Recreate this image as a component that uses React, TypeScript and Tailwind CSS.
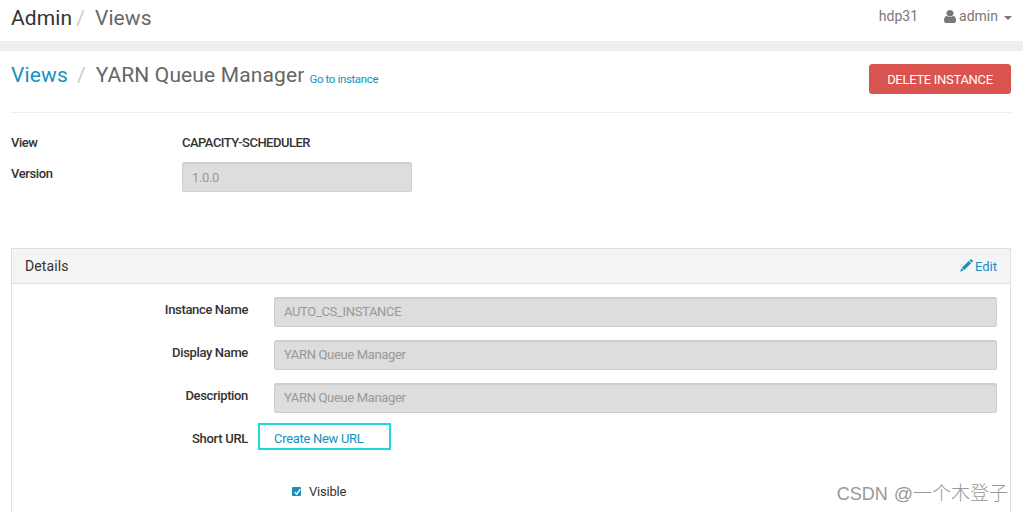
import type { ReactNode } from "react";

type FieldRowProps = {
  label: string;
  value: string;
};

function UserIcon() {
  return (
    <svg viewBox="0 0 1280 1536" className="h-[13px] w-[12px] shrink-0" fill="currentColor" preserveAspectRatio="none">
      <path d="M1280 1271q0 109-62.5 187t-150.5 78h-854q-88 0-150.5-78t-62.5-187q0-85 8.5-160.5t31.5-152 58.5-131 94-89 134.5-34.5q131 128 313 128t313-128q76 0 134.5 34.5t94 89 58.5 131 31.5 152 8.5 160.5zm-256-887q0 159-112.5 271.5t-271.5 112.5-271.5-112.5-112.5-271.5 112.5-271.5 271.5-112.5 271.5 112.5 112.5 271.5z" />
    </svg>
  );
}

function PencilIcon() {
  return (
    <svg viewBox="0 0 13 13" className="h-[13px] w-[13px] shrink-0" fill="currentColor">
      <path d="M10.2.4a.9.9 0 0 1 1.2 0l1.2 1.2a.9.9 0 0 1 0 1.2l-.9.9-2.4-2.4zM8.7 1.9l2.4 2.4-6.8 6.8-2.4-2.4zM1.4 9.3l2.3 2.3L.2 12.8z" />
    </svg>
  );
}

function TextBox({ children }: { children: ReactNode }) {
  return (
    <div className="h-[30px] rounded-xs border border-[#cfcfcf] bg-[#dddddd] px-[9px] text-[13px] tracking-[-0.34px] text-[#999999] shadow-[inset_0_1px_1px_rgba(0,0,0,0.075)]">
      {children}
    </div>
  );
}

function FieldRow({ label, value }: FieldRowProps) {
  return (
    <div className="mb-[13px] flex">
      <div className="mr-[26px] w-[236px] pt-[3px] text-right text-[13px] leading-5 font-medium tracking-[-0.35px]">{label}</div>
      <div className="flex-1 leading-[28px]">
        <TextBox>{value}</TextBox>
      </div>
    </div>
  );
}

export default function App() {
  return (
    <div className="relative h-[513px] overflow-hidden bg-white font-[Roboto,'Liberation_Sans',sans-serif] text-[13px] text-[#333333]">
      <header className="flex h-[41px] justify-between pr-[11px] pl-[11px]">
        <div className="flex pt-1 text-[21px] leading-7 tracking-[0.1px]">
          <span>Admin</span>
          <span className="ml-1 text-[#cccccc]">/</span>
          <span className="ml-[10px] text-[#666666]">Views</span>
        </div>
        <div className="flex pt-[6px] text-[14px] leading-[21px] text-[#777777]">
          <span>hdp31</span>
          <div className="ml-[26px] flex">
            <div className="pt-1">
              <UserIcon />
            </div>
            <span className="ml-[3px]">admin</span>
            <span className="mt-[10px] ml-[6px] h-0 w-0 border-x-4 border-t-4 border-x-transparent border-t-[#777777]" />
          </div>
        </div>
      </header>

      <div className="h-[10px] bg-[#eeeeee]" />

      <main className="pr-3 pl-[11px]">
        <div className="flex h-[62px] justify-between border-b border-[#eeeeee]">
          <div className="flex pt-[10px] text-[21px] leading-7 tracking-[0.13px]">
            <a href="#" className="text-[#1491c1]">Views</a>
            <span className="ml-[9px] text-[#cccccc]">/</span>
            <span className="ml-[10px] text-[#666666]">YARN Queue Manager</span>
            <a href="#" className="ml-[5px] pt-[4px] text-[11.5px] tracking-[-0.37px] text-[#1491c1]">Go to instance</a>
          </div>
          <button className="mt-[13px] h-[30px] w-[142px] rounded-[3px] border border-[#d9534f] bg-[#d9534f] pt-[2px] text-[13px] tracking-[-0.3px] text-white">
            DELETE INSTANCE
          </button>
        </div>

        <div className="h-[135px] pt-5 font-medium">
          <div className="flex h-[29px] leading-5">
            <div className="w-[171px] tracking-[-0.5px]">View</div>
            <div className="tracking-[-0.52px]">CAPACITY-SCHEDULER</div>
          </div>
          <div className="flex">
            <div className="w-[171px] pt-[2px] leading-5 tracking-[-0.4px]">Version</div>
            <div className="w-[230px] leading-[29px] font-normal">
              <TextBox>1.0.0</TextBox>
            </div>
          </div>
        </div>

        <section className="h-[280px] border border-[#e0e0e0]">
          <div className="flex h-[35px] justify-between border-b border-[#e0e0e0] bg-[#f4f4f4] px-[13px] leading-[34px]">
            <h2 className="text-[14px] tracking-[0.1px]">Details</h2>
            <a href="#" className="flex text-[13px] leading-[35px] text-[#1491c1]">
              <span className="mr-[2px] pt-[10px]">
                <PencilIcon />
              </span>
              Edit
            </a>
          </div>
          <div className="pt-[13px] pr-[13px]">
            <FieldRow label="Instance Name" value="AUTO_CS_INSTANCE" />
            <FieldRow label="Display Name" value="YARN Queue Manager" />
            <FieldRow label="Description" value="YARN Queue Manager" />
            <div className="-mt-[3px] flex">
              <div className="mr-[10px] w-[236px] pt-[5px] text-right leading-[21px] font-medium tracking-[-0.3px]">Short URL</div>
              <div className="h-[27px] w-[133px] border-[2px] border-[#1ddada] pl-[14px] leading-[27px] tracking-[-0.3px]">
                <a href="#" className="text-[#1491c1]">Create New URL</a>
              </div>
            </div>
            <label className="mt-[31px] ml-[280px] flex items-center leading-[21px] tracking-[-0.2px]">
              <svg viewBox="0 0 9 9" className="mr-[8px] h-[9px] w-[9px]">
                <rect width="9" height="9" rx="1" fill="#1491c1" />
                <path d="M2.8 5.2l2 2L8.3 2.2" fill="none" stroke="#fff" strokeWidth="1.4" />
              </svg>
              Visible
            </label>
          </div>
        </section>
      </main>

      <div className="absolute top-[480px] right-[15px] flex font-['Liberation_Sans','Noto_Sans_CJK_SC',sans-serif] text-[19px] leading-7 font-light whitespace-nowrap text-[#999999]">
        <span className="mr-[6px] text-[18px]">CSDN</span>
        <span>@一个木登子</span>
      </div>
    </div>
  );
}
